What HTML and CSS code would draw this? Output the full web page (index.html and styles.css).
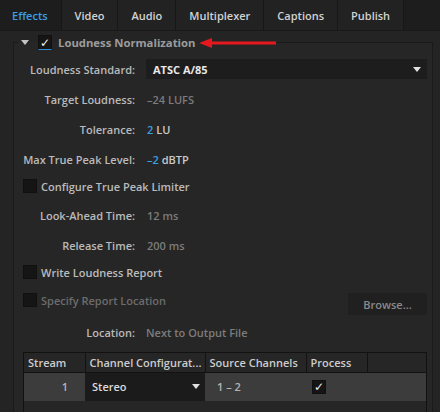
FILE: index.html
```html
<!DOCTYPE html>
<html>
<head>
<meta charset="utf-8">
<link rel="stylesheet" href="styles.css">
</head>
<body>
<div class="tabs">
  <div class="tab active">Effects</div>
  <div class="tab">Video</div>
  <div class="tab">Audio</div>
  <div class="tab">Multiplexer</div>
  <div class="tab">Captions</div>
  <div class="tab">Publish</div>
  <div class="tab-fill"></div>
</div>
<div class="panel">
  <fieldset class="group">
    <legend class="legend">
      <span class="disclosure"></span>
      <span class="check checked focus">✓</span>
      <span class="title">Loudness Normalization</span>
    </legend>
    <div class="rows">
      <div class="row r1">
        <span class="label">Loudness Standard:</span>
        <div class="select"><span class="select-text">ATSC A/85</span><span class="arrow"></span></div>
      </div>
      <div class="row">
        <span class="label">Target Loudness:</span>
        <span class="value dim">–24 LUFS</span>
      </div>
      <div class="row">
        <span class="label">Tolerance:</span>
        <span class="value"><span class="num">2</span> LU</span>
      </div>
      <div class="row">
        <span class="label">Max True Peak Level:</span>
        <span class="value"><span class="num">–2</span> dBTP</span>
      </div>
      <div class="row r5">
        <span class="check"></span>
        <span class="check-label">Configure True Peak Limiter</span>
      </div>
      <div class="row r6">
        <span class="label">Look-Ahead Time:</span>
        <span class="value dim">12 ms</span>
      </div>
      <div class="row r7">
        <span class="label">Release Time:</span>
        <span class="value dim">200 ms</span>
      </div>
      <div class="row r8">
        <span class="check"></span>
        <span class="check-label">Write Loudness Report</span>
      </div>
      <div class="row r9">
        <span class="check"></span>
        <span class="check-label disabled">Specify Report Location</span>
        <span class="button">Browse...</span>
      </div>
      <div class="row r10">
        <span class="label">Location:</span>
        <span class="value dim loc">Next to Output File</span>
      </div>
    </div>
    <div class="table-wrap">
      <table class="grid">
        <thead>
          <tr>
            <th class="c1">Stream</th>
            <th class="c2">Channel Configurat...</th>
            <th class="c3">Source Channels</th>
            <th class="c4">Process</th>
            <th class="c5"></th>
          </tr>
        </thead>
        <tbody>
          <tr>
            <td class="c1 light num-cell">1</td>
            <td class="c2 darkcell"><div class="cell-select"><span>Stereo</span><span class="arrow"></span></div></td>
            <td class="c3 light src">1 – 2</td>
            <td class="c4 proc"><span class="check checked small">✓</span></td>
            <td class="c5 light"></td>
          </tr>
        </tbody>
      </table>
    </div>
  </fieldset>
</div>
<svg class="annot" width="80" height="12" viewBox="0 0 80 12">
  <polygon points="0,6 13,1 13,11" fill="#e5171f"/>
  <rect x="12" y="4.5" width="65" height="3" fill="#e5171f"/>
</svg>
</body>
</html>
```

FILE: styles.css
```css
* { box-sizing: border-box; }
html, body { margin: 0; padding: 0; }
body {
  width: 440px;
  height: 412px;
  overflow: hidden;
  background: #232323;
  font-family: "Open Sans", "DejaVu Sans", sans-serif;
  font-size: 11px;
  color: #b8b8b8;
  position: relative;
}

.tabs {
  display: flex;
  height: 31px;
  background: #1d1d1d;
  border-bottom: 1px solid #191919;
}
.tab {
  display: flex;
  align-items: center;
  padding: 0 13px 0 13px;
  font-weight: 600;
  font-size: 11px;
  color: #d2d2d2;
  background: #222222;
  border-right: 1px solid #171717;
}
.tab.active {
  background: #1d1d1d;
  color: #3a9fe3;
  padding-left: 12px;
  padding-right: 13px;
}
.tab-fill { flex: 1; }

.panel {
  padding: 4px 7px 0 13px;
  background: #242424;
}
.group {
  margin: 0;
  padding: 0 5px 0 9px;
  border: 1px solid #1a1a1a;
  border-bottom: none;
  background: #262626;
  min-height: 400px;
}
.legend {
  display: flex;
  align-items: center;
  margin-left: -5px;
  padding: 0 3px 0 3px;
  height: 15px;
}
.disclosure {
  width: 0; height: 0;
  border-left: 4px solid transparent;
  border-right: 4px solid transparent;
  border-top: 5px solid #c4c4c4;
  margin-right: 9px;
}
.check {
  width: 14px;
  height: 14px;
  background: #151515;
  border: 1px solid #101010;
  display: inline-flex;
  align-items: center;
  justify-content: center;
  color: #f2f2f2;
  font-size: 12px;
  line-height: 1;
  flex: none;
}
.check.focus { border-bottom: 1px solid #2a8fd6; height: 15px; }
.title {
  margin-left: 6px;
  font-weight: 700;
  font-size: 11.3px;
  color: #9c9c9c;
}

.rows { padding-top: 4px; }
.row {
  display: flex;
  align-items: center;
  height: 30px;
}
.r5 { height: 24px; }
.r6 { height: 34px; }
.r7 { height: 26px; }
.r8 { height: 28px; }
.r9 { height: 28px; align-items: center; }
.r10 { height: 37px; }

.label {
  width: 112px;
  text-align: right;
  font-weight: 600;
  color: #bababa;
  flex: none;
}
.value {
  margin-left: 12px;
  font-weight: 600;
  color: #cacaca;
}
.value.dim { color: #7c7c7c; }
.value.loc { margin-left: 11px; }
.num { color: #3a9fe3; }

.select {
  margin-left: 11px;
  flex: 1;
  height: 20px;
  background: #1d1d1d;
  display: flex;
  align-items: center;
  justify-content: space-between;
  padding: 0 6px 0 7px;
}
.select-text { font-weight: 700; color: #e8e8e8; }
.arrow {
  width: 0; height: 0;
  border-left: 4px solid transparent;
  border-right: 4px solid transparent;
  border-top: 5px solid #e0e0e0;
}

.check-label {
  margin-left: 4px;
  font-weight: 600;
  color: #bcbcbc;
}
.check-label.disabled { color: #6c6c6c; }
.button {
  margin-left: auto;
  align-self: flex-start;
  margin-top: 7px;
  width: 79px;
  height: 22px;
  background: #202020;
  color: #8a8a8a;
  font-weight: 600;
  display: flex;
  align-items: center;
  justify-content: center;
}

.table-wrap {
  margin-top: 1px;
  border: 1px solid #121212;
  height: 80px;
  background: #262626;
}
.grid {
  border-collapse: collapse;
  table-layout: fixed;
  width: 402px;
}
.grid th {
  height: 19px;
  padding: 0 0 0 4px;
  text-align: left;
  font-weight: 600;
  color: #cdcdcd;
  border-right: 1px solid #121212;
  border-bottom: 1px solid #121212;
  white-space: nowrap;
  overflow: hidden;
}
.grid th.c5 { border-right: none; }
.c1 { width: 61px; }
.c2 { width: 120px; }
.c3 { width: 101px; }
.c4 { width: 61px; }
.c5 { width: 59px; }
.grid td {
  height: 29px;
  padding: 0;
  font-weight: 600;
}
.light { background: #3c3c3c; color: #b4b4b4; }
.num-cell { text-align: right; padding-right: 17px !important; }
.darkcell { background: #1b1b1b; color: #dcdcdc; }
.cell-select {
  display: flex;
  align-items: center;
  justify-content: space-between;
  padding: 0 5px 0 7px;
}
.src { padding-left: 12px !important; }
.proc { background: #3c3c3c; padding-left: 6px !important; }
.check.small { font-size: 12px; }

.annot {
  position: absolute;
  left: 199px;
  top: 37px;
}
```
